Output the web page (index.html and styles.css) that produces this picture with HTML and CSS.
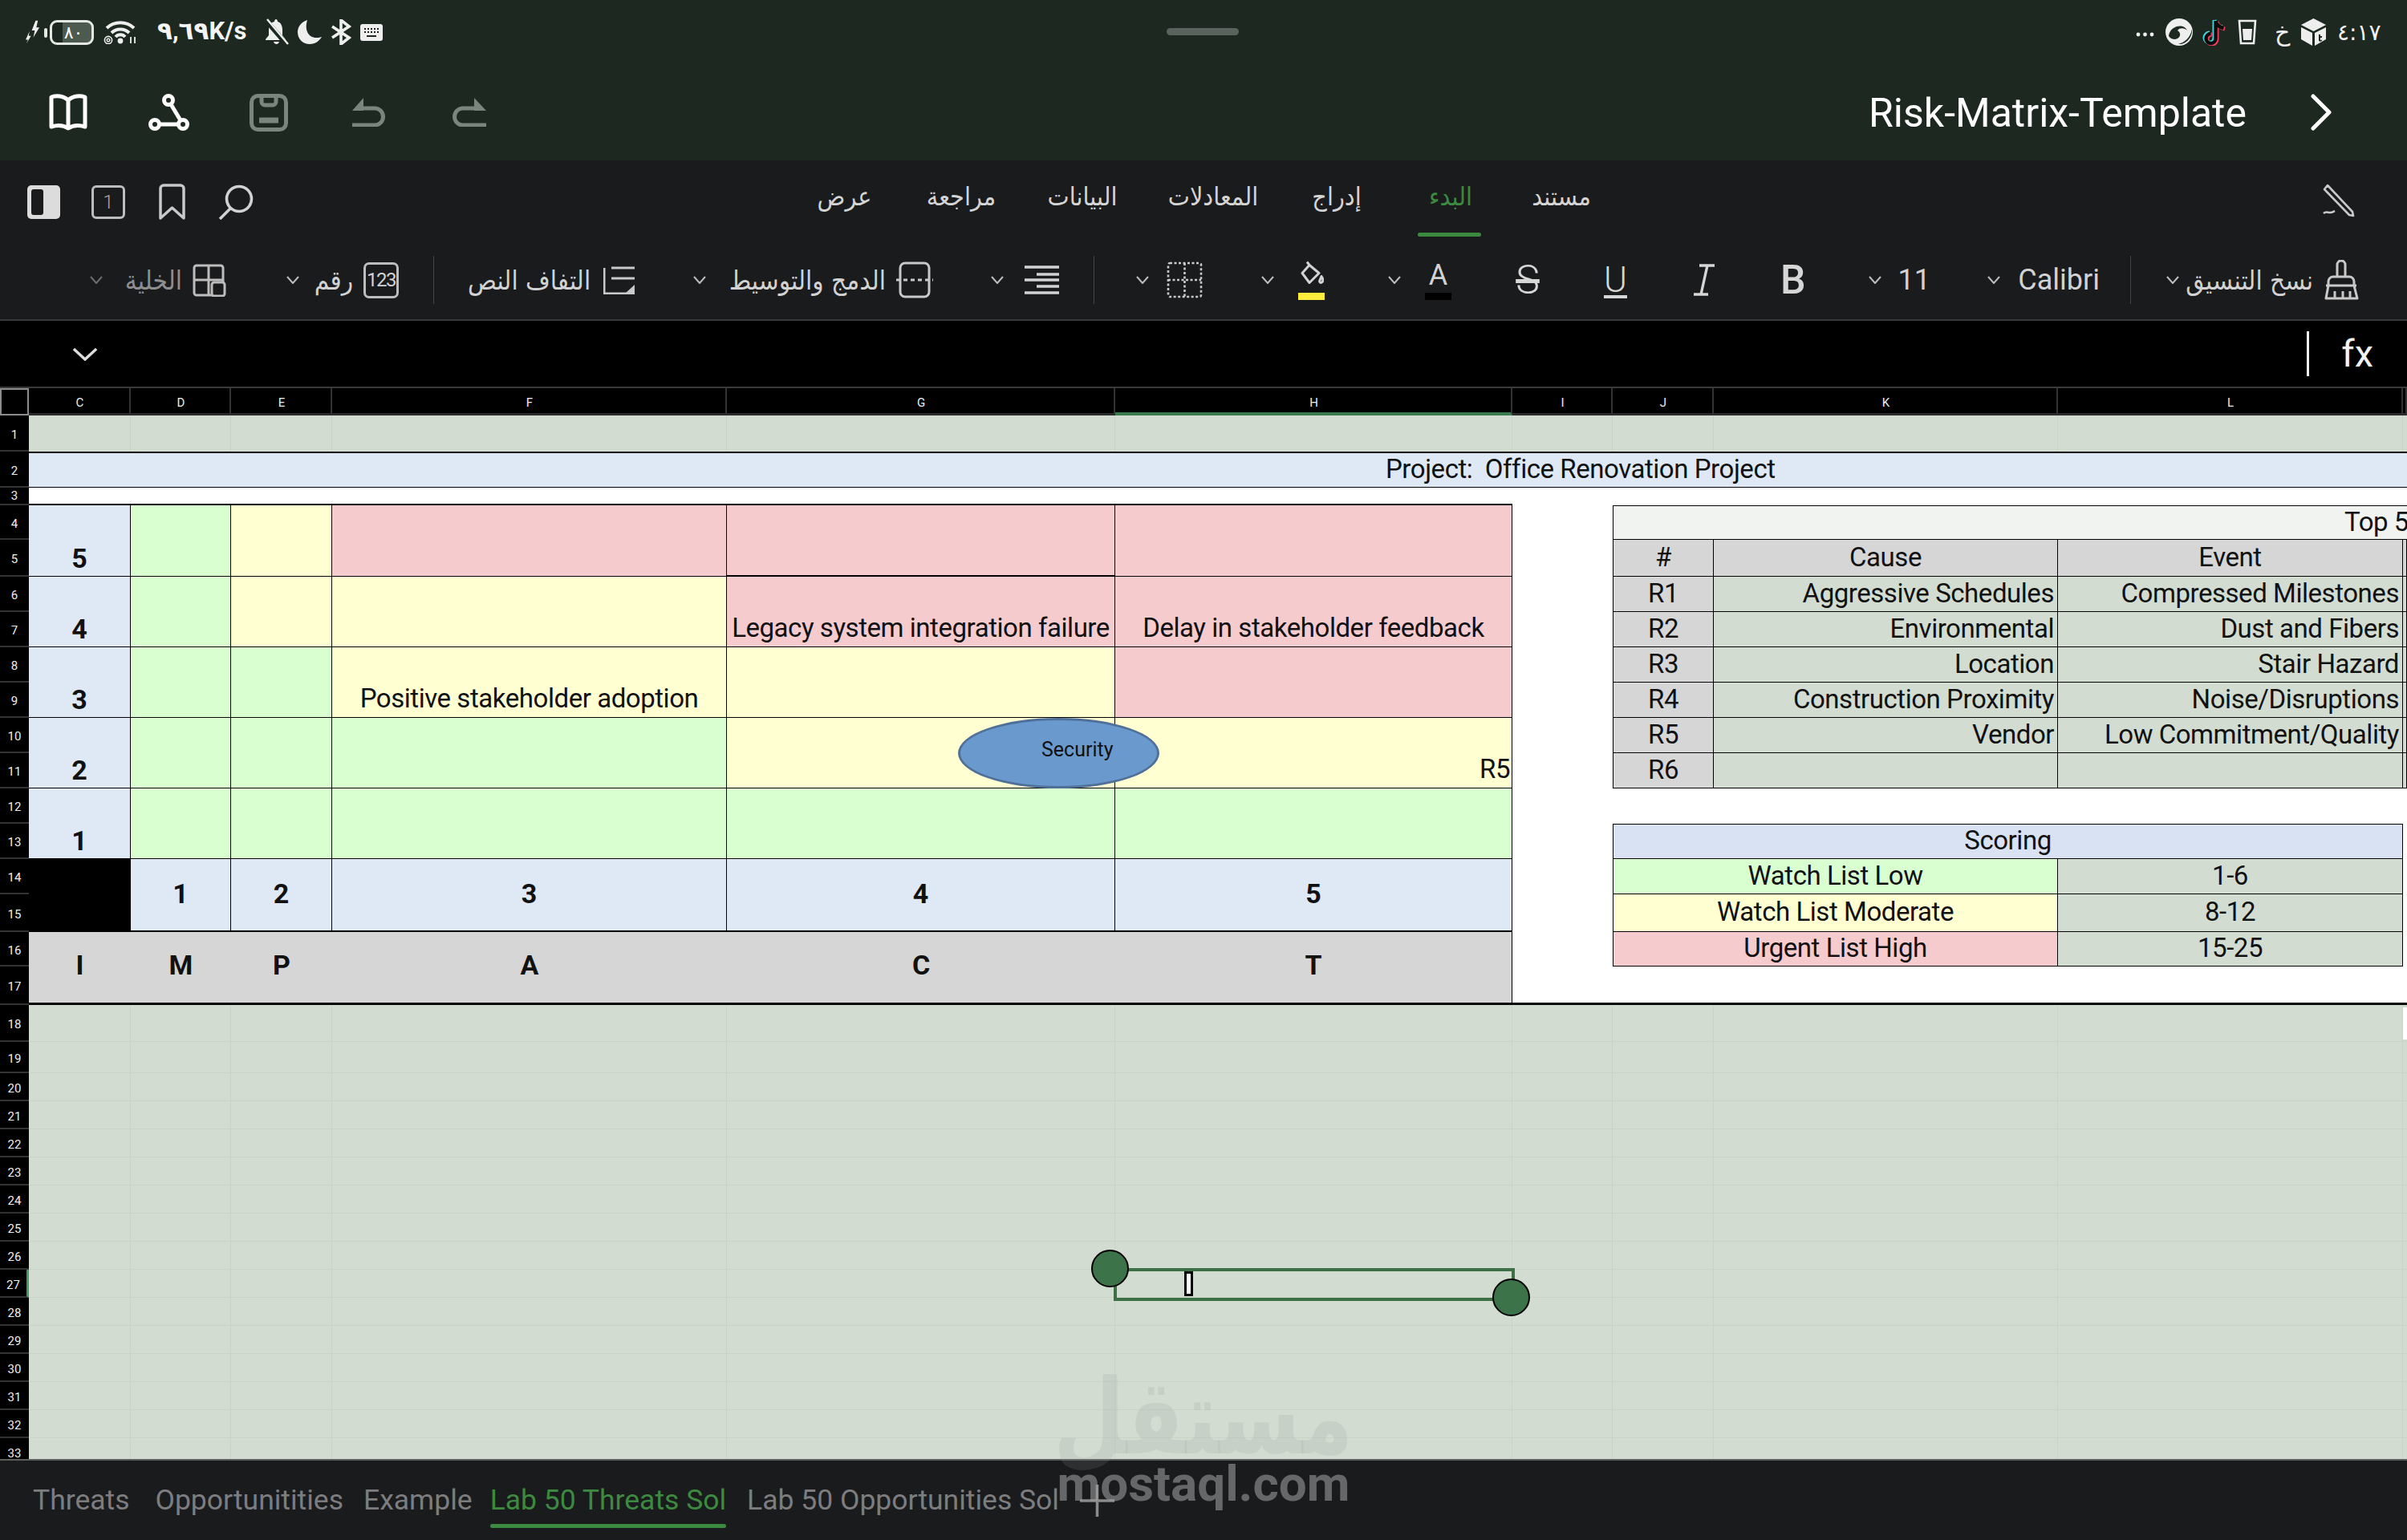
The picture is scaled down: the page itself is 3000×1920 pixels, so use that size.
FILE: index.html
```html
<!DOCTYPE html>
<html lang="ar">
<head>
<meta charset="utf-8">
<title>Risk-Matrix-Template</title>
<link rel="stylesheet" href="styles.css">
</head>
<body>
<div class="app" dir="ltr">
  <header class="topbar">
    <div class="handle"></div>
    <div class="status">
      <div class="status-left">
        <svg class="i-bolt" viewBox="0 0 20 30"><path fill="#eee" d="M13 0L8 13h4l-2 9 8-13h-4l2-9zM5 14L0 25h3l-2 5 6-10H4z"/></svg>
        <div class="batt"><span>٨٠</span></div>
        <svg class="i-wifi" viewBox="0 0 44 30" fill="none" stroke="#eee" stroke-width="4"><path d="M5 10a25 25 0 0 1 34 0M11 16a16 16 0 0 1 22 0M16 21a8 8 0 0 1 12 0"/><circle cx="22" cy="26" r="3.4" fill="#eee" stroke="none"/><circle cx="7" cy="25" r="4.6" stroke-width="1.6"/><circle cx="7" cy="25" r="1.8" stroke-width="1.4"/><path stroke-width="1.8" d="M35 21v8M40 29v-8"/></svg>
        <span class="speed">٩,٦٩K/s</span>
        <svg class="i-bell" viewBox="0 0 30 34"><path fill="#eee" d="M14 1c-1 0-2 1-2 3C7 5 5 9 5 14v7l-4 5v1h25v-1l-4-5v-6C22 9 20 5 16 4c0-2-1-3-2-3zM11 29h7c-1 4-6 4-7 0z"/><path d="M1 2l27 31" stroke="#1c2820" stroke-width="6"/><path d="M3 1l26 31" stroke="#eee" stroke-width="2.4"/></svg>
        <svg class="i-moon" viewBox="0 0 30 30"><path fill="#eee" d="M12 0C5 2 0 8 0 15c0 9 7 15 15 15 7 0 12-4 15-9-3 1-5 1-7 1-9 0-15-9-11-22z"/></svg>
        <svg class="i-bt" viewBox="0 0 26 32" fill="none" stroke="#eee" stroke-width="3.6"><path d="M2 9l21 14-10 8V1l10 8L2 23"/></svg>
        <svg class="i-kb" viewBox="0 0 28 21"><rect width="28" height="21" rx="3" fill="#eee"/><path stroke="#1c2820" stroke-width="2" stroke-dasharray="2 2" d="M5 6h18M5 10h18"/><path stroke="#1c2820" stroke-width="2" d="M8 15h12"/></svg>
      </div>
      <div class="status-right">
        <svg class="i-dots" viewBox="0 0 23 6"><circle cx="3" cy="3" r="2.4" fill="#eee"/><circle cx="11.500" cy="3" r="2.400" fill="#eee"/><circle cx="20" cy="3" r="2.4" fill="#eee"/></svg>
        <svg class="i-edge" viewBox="0 0 36 34"><circle cx="18" cy="17" r="17" fill="#eee"/><path d="M5 22C6 9 24 5 28 15c-3-3-9-4-12 0 5 3 4 10-3 11-3 0-6-1-8-4zM34 13c1 10-7 20-17 19 7-2 15-7 17-19z" fill="#1c2820"/></svg>
        <svg class="i-tt" viewBox="0 0 30 34" fill="none" stroke-width="5"><path stroke="#3fd8de" d="M16 2v22a6 6 0 1 1-6-6M16 2c1 5 5 8 10 9"/><path stroke="#ee3f5e" d="M19 4v22a6 6 0 1 1-6-6M19 4c1 5 5 8 10 9"/><path stroke="#0b0b0b" stroke-width="4.400" d="M17.500 3v22a6 6 0 1 1-6-6M17.500 3c1 5 5 8 10 9"/></svg>
        <svg class="i-cup" viewBox="0 0 24 32"><path fill="none" stroke="#eee" stroke-width="2.600" d="M2 2h20l-2 28H4z"/><path fill="#eee" d="M6 12h12l-1 14H7z"/></svg>
        <span class="kh">خ</span>
        <svg class="i-box" viewBox="0 0 31 34"><path fill="#eee" d="M15.500 0L31 8 15.500 16 0 8zM0 11l14 7v16L0 26zM17 18l14-7v15l-14 8z"/><path fill="#1c2820" d="M22 20h2v2h2v2h-2v3c1 0 2 0 2-1v2c-2 1-4 1-4-1z"/></svg>
        <span class="time">٤:١٧</span>
      </div>
    </div>
    <div class="titlerow">
      <div class="title-icons">
        <svg class="i-book" viewBox="0 0 48 46" fill="none" stroke="#fff" stroke-width="5" stroke-linejoin="round"><path d="M24 8C18 2 9 2 3 4v37c7-2 15-2 21 2 6-4 14-4 21-2V4c-6-2-15-2-21 4zM24 8v35"/></svg>
        <svg class="i-share" viewBox="0 0 51 46" fill="none" stroke="#fff" stroke-width="5"><circle cx="25" cy="8" r="5.500"/><circle cx="8" cy="38" r="5.500"/><circle cx="43" cy="38" r="5.500"/><path d="M28 13l12 20M14 38h23"/></svg>
        <svg class="i-save" viewBox="0 0 48 47" fill="none" stroke="#7a857e" stroke-width="5"><rect x="2.500" y="2.500" width="43" height="42" rx="8"/><path d="M15 3v7a4 4 0 0 0 4 4h10a4 4 0 0 0 4-4V3"/><path d="M12 33h24" stroke-width="7"/></svg>
        <svg class="i-undo" viewBox="0 0 44 36" fill="none" stroke="#7a857e" stroke-width="5"><path d="M12 13h17a10.500 10.500 0 0 1 0 21H1"/><path fill="#7a857e" stroke="none" d="M15 0v16H1z"/></svg>
        <svg class="i-redo" viewBox="0 0 44 36" fill="none" stroke="#7a857e" stroke-width="5"><path d="M32 13H15a10.500 10.500 0 0 0 0 21h29"/><path fill="#7a857e" stroke="none" d="M29 0v16h15z"/></svg>
      </div>
      <div class="doc">
        <span class="doc-name">Risk-Matrix-Template</span>
        <svg class="i-next" viewBox="0 0 26 46" fill="none" stroke="#fff" stroke-width="5" stroke-linecap="round" stroke-linejoin="round"><path d="M3 3l20 20L3 43"/></svg>
      </div>
    </div>
  </header>

  <section class="ribbon">
    <div class="tabrow">
      <div class="view-icons">
        <svg class="i-panel" viewBox="0 0 41 42"><rect width="41" height="42" rx="5" fill="#dcdcdc"/><rect x="5" y="5" width="15" height="32" rx="3" fill="#1a1b1d"/></svg>
        <div class="pagebox">1</div>
        <svg class="i-mark" viewBox="0 0 33 45" fill="none" stroke="#c9c9c9" stroke-width="3.500" stroke-linejoin="round"><path d="M2 6a4 4 0 0 1 4-4h21a4 4 0 0 1 4 4v37L16.500 30 2 43z"/></svg>
        <svg class="i-search" viewBox="0 0 44 44" fill="none" stroke="#d2d2d2" stroke-width="3.600"><circle cx="26" cy="18" r="15.500"/><path d="M15 30L2 43"/></svg>
      </div>
      <nav class="tabs">
        <span>عرض</span><span>مراجعة</span><span>البيانات</span><span>المعادلات</span><span>إدراج</span><span class="on">البدء</span><span>مستند</span>
      </nav>
      <svg class="i-pen" viewBox="0 0 41 41" fill="none" stroke="#c9c9c9" stroke-width="2.600" stroke-linejoin="round"><path d="M3 6l4-5 31 33 1 5-5-1zM2 36c3-3 5-1 8-1s4-1 6-2"/></svg>
    </div>
    <div class="fmtrow">
      <div class="tool t-cell dim"><svg class="caret" viewBox="0 0 16 10"><path d="M1 1l7 8 7-8"/></svg><span class="lbl">الخلية</span><svg class="i-cells" viewBox="0 0 42 41" fill="none" stroke="#bdbdbd" stroke-width="3"><rect x="2" y="2" width="36" height="37" rx="3"/><path d="M20 2v37M2 20h36"/><rect x="24" y="23" width="16" height="17" rx="3" fill="#1a1b1d"/></svg></div>
      <div class="tool t-num"><svg class="caret" viewBox="0 0 16 10"><path d="M1 1l7 8 7-8"/></svg><span class="lbl">رقم</span><div class="numbox">123</div></div>
      <i class="sep s1"></i>
      <div class="tool t-wrap"><span class="lbl">التفاف النص</span><svg class="i-wrap" viewBox="0 0 40 36" fill="none" stroke="#c9c9c9" stroke-width="3"><path d="M1 3v32h38M10 3h29M10 16h29"/><path fill="#c9c9c9" stroke="none" d="M39 24v10H28z"/></svg></div>
      <div class="tool t-merge"><svg class="caret" viewBox="0 0 16 10"><path d="M1 1l7 8 7-8"/></svg><span class="lbl">الدمج والتوسيط</span><svg class="i-merge" viewBox="0 0 46 46" fill="none" stroke="#c9c9c9" stroke-width="3"><rect x="5" y="2" width="36" height="42" rx="6"/><path d="M0 23h46" stroke-dasharray="5 4"/></svg></div>
      <div class="tool t-align"><svg class="caret" viewBox="0 0 16 10"><path d="M1 1l7 8 7-8"/></svg><svg class="i-align" viewBox="0 0 43 36" stroke="#d2d2d2" stroke-width="3.500"><path d="M0 2h43M15 11h28M0 18h43M15 26h28M0 34h43"/></svg></div>
      <i class="sep s2"></i>
      <div class="tool t-border"><svg class="caret" viewBox="0 0 16 10"><path d="M1 1l7 8 7-8"/></svg><svg class="i-border" viewBox="0 0 45 46" fill="none" stroke="#c9c9c9" stroke-width="2.600" stroke-dasharray="3 2.500"><rect x="2" y="2" width="41" height="42" rx="2"/><path d="M22.500 2v42M2 23h41"/></svg></div>
      <div class="tool t-fill"><svg class="caret" viewBox="0 0 16 10"><path d="M1 1l7 8 7-8"/></svg><div class="stack"><svg class="i-bucket" viewBox="0 0 30 30" fill="none" stroke="#d2d2d2" stroke-width="3" stroke-linejoin="round"><path d="M9 1l3 4L3 15l9 12 12-12L12 5M27 19c2 3 3 5 1 7s-4 0-3-2z"/></svg><b class="swatch yellow"></b></div></div>
      <div class="tool t-color"><svg class="caret" viewBox="0 0 16 10"><path d="M1 1l7 8 7-8"/></svg><div class="stack"><span class="letter-a">A</span><b class="swatch black"></b></div></div>
      <span class="fx-btn t-s">S</span>
      <span class="fx-btn t-u">U</span>
      <svg class="i-italic" viewBox="0 0 26 40" fill="none" stroke="#d6d6d6" stroke-width="3.400"><path d="M7 2h19M0 38h18M17 2L9 38"/></svg>
      <span class="fx-btn t-b">B</span>
      <div class="tool t-size"><svg class="caret" viewBox="0 0 16 10"><path d="M1 1l7 8 7-8"/></svg><span class="val">11</span></div>
      <div class="tool t-font"><svg class="caret" viewBox="0 0 16 10"><path d="M1 1l7 8 7-8"/></svg><span class="val">Calibri</span></div>
      <i class="sep s3"></i>
      <div class="tool t-copy"><svg class="caret" viewBox="0 0 16 10"><path d="M1 1l7 8 7-8"/></svg><span class="lbl">نسخ التنسيق</span><svg class="i-brush" viewBox="0 0 44 50" fill="none" stroke="#c9c9c9" stroke-width="3" stroke-linejoin="round"><path d="M17 21V6a5 5 0 0 1 10 0v15M6 32v-5a6 6 0 0 1 6-6h20a6 6 0 0 1 6 6v5zM3 48l3-16h32l4 16zM14 48v-9M24 48v-9M33 48v-9M3 32h38"/></svg></div>
    </div>
  </section>

  <section class="formula">
    <svg class="i-down" viewBox="0 0 34 18" fill="none" stroke="#ddd" stroke-width="3.600"><path d="M2 2l15 14L32 2"/></svg>
    <div class="fx"><i class="fx-bar"></i><span>fx</span></div>
  </section>

  <section class="sheet">
    <!-- faint grid lines -->
    <i class="vl cC"></i><i class="vl cD"></i><i class="vl cE"></i><i class="vl cF"></i><i class="vl cG"></i><i class="vl cH"></i><i class="vl cI"></i><i class="vl cJ"></i><i class="vl cK"></i><i class="vl cL"></i>
    <i class="hl r18"></i><i class="hl r19"></i><i class="hl r20"></i><i class="hl r21"></i><i class="hl r22"></i><i class="hl r23"></i><i class="hl r24"></i><i class="hl r25"></i><i class="hl r26"></i><i class="hl r27"></i><i class="hl r28"></i><i class="hl r29"></i><i class="hl r30"></i><i class="hl r31"></i><i class="hl r32"></i>

    <!-- column headers -->
    <div class="corner"></div>
    <div class="ch cC">C</div><div class="ch cD">D</div><div class="ch cE">E</div><div class="ch cF">F</div><div class="ch cG">G</div><div class="ch cH active">H</div><div class="ch cI">I</div><div class="ch cJ">J</div><div class="ch cK">K</div><div class="ch cL">L</div><div class="ch cM"></div>

    <!-- row headers -->
    <div class="rh r1">1</div><div class="rh r2">2</div><div class="rh r3 thin">3</div><div class="rh r4">4</div><div class="rh r5">5</div><div class="rh r6">6</div><div class="rh r7">7</div><div class="rh r8">8</div><div class="rh r9">9</div><div class="rh r10">10</div><div class="rh r11">11</div><div class="rh r12">12</div><div class="rh r13">13</div><div class="rh r14">14</div><div class="rh r15">15</div><div class="rh r16">16</div><div class="rh r17">17</div><div class="rh r18">18</div><div class="rh r19">19</div><div class="rh r20">20</div><div class="rh r21">21</div><div class="rh r22">22</div><div class="rh r23">23</div><div class="rh r24">24</div><div class="rh r25">25</div><div class="rh r26">26</div><div class="rh r27 active">27</div><div class="rh r28">28</div><div class="rh r29">29</div><div class="rh r30">30</div><div class="rh r31">31</div><div class="rh r32">32</div><div class="rh r33">33</div>

    <!-- banner and white sheet zones -->
    <div class="banner r2">Project:&nbsp; Office Renovation Project</div>
    <div class="whitegap r3"></div>
    <div class="whitezone"></div>
    <i class="tick"></i>

    <!-- matrix -->
    <div class="cell blue axis cC m4">5</div><div class="cell green cD m4"></div><div class="cell yellow cE m4"></div><div class="cell red cF m4"></div><div class="cell red cG m4 heavy"></div><div class="cell red cH m4"></div>
    <div class="cell blue axis cC m6">4</div><div class="cell green cD m6"></div><div class="cell yellow cE m6"></div><div class="cell yellow cF m6"></div><div class="cell red cG m6 txt">Legacy system integration failure</div><div class="cell red cH m6 txt">Delay in stakeholder feedback</div>
    <div class="cell blue axis cC m8">3</div><div class="cell green cD m8"></div><div class="cell green cE m8"></div><div class="cell yellow cF m8 txt">Positive stakeholder adoption</div><div class="cell yellow cG m8"></div><div class="cell red cH m8"></div>
    <div class="cell blue axis cC m10">2</div><div class="cell green cD m10"></div><div class="cell green cE m10"></div><div class="cell green cF m10"></div><div class="cell yellow cG m10"></div><div class="cell yellow cH m10 txt end">R5</div>
    <div class="cell blue axis cC m12">1</div><div class="cell green cD m12"></div><div class="cell green cE m12"></div><div class="cell green cF m12"></div><div class="cell green cG m12"></div><div class="cell green cH m12"></div>
    <div class="blackcell cC m14"></div><div class="cell blue num cD m14">1</div><div class="cell blue num cE m14">2</div><div class="cell blue num cF m14">3</div><div class="cell blue num cG m14">4</div><div class="cell blue num cH m14">5</div>
    <div class="impact cC m16">I</div><div class="impact cD m16">M</div><div class="impact cE m16">P</div><div class="impact cF m16">A</div><div class="impact cG m16">C</div><div class="impact cH m16 lastimpact">T</div>

    <!-- top 5 table -->
    <div class="cell pale top5 r4">Top 5 Risks</div>
    <div class="cell grey mid cJ r5">#</div><div class="cell grey mid cK r5">Cause</div><div class="cell grey mid cL r5">Event</div><div class="cell grey cM r5"></div>
    <div class="cell grey mid cJ r6">R1</div><div class="cell sage tr cK r6">Aggressive Schedules</div><div class="cell sage tr cL r6">Compressed Milestones</div><div class="cell sage cM r6"></div>
    <div class="cell grey mid cJ r7">R2</div><div class="cell sage tr cK r7">Environmental</div><div class="cell sage tr cL r7">Dust and Fibers</div><div class="cell sage cM r7"></div>
    <div class="cell grey mid cJ r8">R3</div><div class="cell sage tr cK r8">Location</div><div class="cell sage tr cL r8">Stair Hazard</div><div class="cell sage cM r8"></div>
    <div class="cell grey mid cJ r9">R4</div><div class="cell sage tr cK r9">Construction Proximity</div><div class="cell sage tr cL r9">Noise/Disruptions</div><div class="cell sage cM r9"></div>
    <div class="cell grey mid cJ r10">R5</div><div class="cell sage tr cK r10">Vendor</div><div class="cell sage tr cL r10">Low Commitment/Quality</div><div class="cell sage cM r10"></div>
    <div class="cell grey mid cJ r11">R6</div><div class="cell sage tr cK r11"></div><div class="cell sage tr cL r11"></div><div class="cell sage cM r11"></div>

    <!-- scoring table -->
    <div class="cell scorehead mid score-all r13">Scoring</div>
    <div class="cell green mid score-l r14">Watch List Low</div><div class="cell sage mid cL r14">1-6</div>
    <div class="cell yellow mid score-l r15">Watch List Moderate</div><div class="cell sage mid cL r15">8-12</div>
    <div class="cell red mid score-l r16">Urgent List High</div><div class="cell sage mid cL r16">15-25</div>

    <!-- floating shape and selection -->
    <div class="shape"><span>Security</span></div>
    <div class="selection">
      <i class="grip grip-a"></i>
      <i class="grip grip-b"></i>
      <i class="caret-bar"></i>
    </div>
  </section>

  <footer class="sheets">
    <span class="st st1">Threats</span>
    <span class="st st2">Opportunitities</span>
    <span class="st st3">Example</span>
    <span class="st st4 on">Lab 50 Threats Sol</span>
    <span class="st st5">Lab 50 Opportunities Sol</span>
    <svg class="i-plus" viewBox="0 0 43 40" stroke="#8b8b8b" stroke-width="3.500"><path d="M0 20h43M21.500 0v40"/></svg>
  </footer>

  <div class="wm">
    <span class="wm-ar">مستقل</span>
    <span class="wm-en">mostaql.com</span>
  </div>
</div>
</body>
</html>
```

FILE: styles.css
```css
* { box-sizing: border-box; }
html, body { margin: 0; padding: 0; background: #000; }
body { font-family: Roboto, "DejaVu Sans", sans-serif; }
.app { position: relative; width: 3000px; height: 1920px; overflow: hidden; display: flex; flex-direction: column; }
svg { display: block; flex: none; }

/* top bar */
.topbar { height: 200px; background: #1c2820; position: relative; color: #fff; }
.handle { position: absolute; left: 1454px; top: 35px; width: 90px; height: 9px; border-radius: 5px; background: #5b635e; }
.status { height: 80px; padding: 24px 35px 0 32px; display: flex; justify-content: space-between; align-items: flex-start; }
.status-left, .status-right { display: flex; align-items: center; height: 32px; }
.status-left { gap: 11px; }
.i-bolt { width: 19px; height: 30px; }
.batt { position: relative; width: 55px; height: 31px; border: 3px solid #e4e8e4; border-radius: 9px; background: linear-gradient(90deg, transparent 26%, #4c5a50 26%); display: flex; align-items: center; justify-content: center; font: 22px "DejaVu Sans", sans-serif; color: #fff; padding-left: 4px; }
.batt::before { content: ""; position: absolute; left: -10px; top: 7px; width: 4px; height: 12px; border-radius: 2px; background: #e4e8e4; }
.i-wifi { width: 44px; height: 30px; }
.speed { margin: 0 13px; font: 700 31px Roboto, "DejaVu Sans", sans-serif; color: #f4f4f4; white-space: nowrap; width: 110px; transform: translateY(-2px); }
.i-bell { width: 30px; height: 34px; }
.i-moon { width: 30px; height: 30px; }
.i-bt { width: 26px; height: 32px; }
.i-kb { width: 28px; height: 21px; }
.i-dots { width: 23px; height: 6px; margin-top: 6px; }
.i-edge { width: 36px; height: 34px; margin-left: 13px; }
.i-tt { width: 30px; height: 34px; margin-left: 10px; }
.i-cup { width: 24px; height: 32px; margin-left: 15px; }
.kh { font: 30px "DejaVu Sans", sans-serif; color: #eee; margin-left: 22px; width: 15px; }
.i-box { width: 31px; height: 34px; margin-left: 18px; }
.time { font: 500 28px "DejaVu Sans", sans-serif; color: #f2f2f2; margin-left: 14px; width: 52px; white-space: nowrap; }

.titlerow { height: 120px; display: flex; justify-content: space-between; align-items: center; padding: 0 94px 0 61px; }
.title-icons { display: flex; align-items: center; }
.i-book { width: 48px; height: 46px; }
.i-share { width: 51px; height: 46px; margin-left: 76px; }
.i-save { width: 48px; height: 47px; margin-left: 75px; }
.i-undo { width: 44px; height: 36px; margin-left: 79px; }
.i-redo { width: 44px; height: 36px; margin-left: 80px; }
.doc { display: flex; align-items: center; gap: 80px; }
.doc-name { font-size: 50px; line-height: 60px; color: #fff; letter-spacing: 0; padding-top: 2px; }
.i-next { width: 26px; height: 46px; }

/* ribbon */
.ribbon { height: 200px; background: #1a1b1d; }
.tabrow { height: 100px; position: relative; display: flex; align-items: flex-start; }
.view-icons { display: flex; align-items: center; padding: 29px 0 0 34px; }
.i-panel { width: 41px; height: 42px; }
.pagebox { width: 42px; height: 42px; margin-left: 39px; border: 3px solid #bdbdbd; border-radius: 6px; display: flex; align-items: center; justify-content: center; color: #a9a9a9; font-size: 24px; font-weight: 300; }
.i-mark { width: 33px; height: 45px; margin-left: 42px; }
.i-search { width: 44px; height: 44px; margin-left: 41px; }
.tabs { position: absolute; left: 980px; top: 0; display: grid; grid-template-columns: 145px 146px 156px 170px 138px 146px 130px; height: 100px; font: 32px "DejaVu Sans", sans-serif; font-stretch: condensed; color: #d4d4d4; text-align: center; line-height: 90px; }
.tabs .on { color: #3c8a3f; position: relative; }
.tabs .on::after { content: ""; position: absolute; left: 32px; top: 90px; width: 79px; height: 5px; border-radius: 3px; background: #3c8a3f; }
.i-pen { position: absolute; left: 2894px; top: 30px; width: 41px; height: 41px; }

.fmtrow { height: 100px; display: flex; align-items: center; padding-bottom: 0; border-bottom: 2px solid #3a3a3a; position: relative; color: #d2d2d2; }
.tool { display: flex; align-items: center; justify-content: space-between; height: 60px; flex: none; }
.caret { width: 16px; height: 10px; fill: none; stroke: #bdbdbd; stroke-width: 2; }
.lbl { font: 33px "DejaVu Sans", sans-serif; font-stretch: condensed; white-space: nowrap; margin-left: auto; margin-right: 13px; }
.t-wrap .lbl { margin-right: 16px; }
.val { font-size: 36px; color: #d2d2d2; }
.dim .lbl { color: #8e8e8e; }
.dim .caret { stroke: #6d6d6d; }
.sep { flex: none; width: 1px; height: 60px; background: #444; }
.t-cell { width: 170px; margin-left: 112px; }
.i-cells { width: 42px; height: 41px; }
.t-num { width: 140px; margin-left: 75px; }
.numbox { width: 44px; height: 45px; border: 3px solid #bdbdbd; border-radius: 7px; font-size: 24px; line-height: 39px; text-align: center; letter-spacing: -1.500px; color: #d2d2d2; }
.s1 { margin-left: 43px; }
.t-wrap { width: 206px; margin-left: 42px; }
.i-wrap { width: 40px; height: 36px; }
.t-merge { width: 299px; margin-left: 75px; }
.i-merge { width: 46px; height: 46px; }
.t-align { width: 85px; margin-left: 72px; }
.i-align { width: 43px; height: 36px; }
.s2 { margin-left: 43px; }
.t-border { width: 83px; margin-left: 52px; }
.i-border { width: 45px; height: 46px; }
.t-fill { width: 79px; margin-left: 73px; }
.stack { display: flex; flex-direction: column; align-items: center; width: 33px; height: 50px; justify-content: space-between; }
.i-bucket { width: 30px; height: 33px; }
.swatch { display: block; width: 33px; height: 9px; }
.yellow.swatch { background: #ffeb3b; }
.black.swatch { background: #000; }
.t-color { width: 79px; margin-left: 79px; }
.letter-a { font-size: 36px; line-height: 38px; color: #d2d2d2; }
.fx-btn { flex: none; font-size: 50px; line-height: 60px; text-align: center; color: #d6d6d6; }
.t-s { width: 38px; margin-left: 76px; text-decoration: line-through; font-weight: 300; }
.t-u { width: 37px; margin-left: 72px; font-size: 44px; font-weight: 300; text-decoration: underline; text-underline-offset: 4px; }
.i-italic { width: 26px; height: 40px; margin-left: 79px; }
.t-b { width: 28px; margin-left: 82px; font-weight: 500; }
.t-size { width: 77px; margin-left: 82px; }
.t-font { width: 140px; margin-left: 71px; }
.s3 { margin-left: 38px; }
.t-copy { width: 240px; margin-left: 44px; }
.i-brush { width: 44px; height: 50px; }

/* formula bar */
.formula { height: 84px; background: #000; border-bottom: 2px solid #3a3a3a; display: flex; align-items: center; justify-content: space-between; padding: 0 42px 0 90px; }
.i-down { width: 32px; height: 17px; }
.fx { display: flex; align-items: center; gap: 40px; color: #f2f2f2; font-size: 47px; line-height: 56px; }
.fx-bar { width: 3px; height: 56px; background: #f2f2f2; }

/* sheet grid */
.sheet { position: relative; height: 1335px; background: #d2dcd0; overflow: hidden; display: grid;
  grid-template-columns: 36px 127px 125px 126px 492px 484px 495px 125px 126px 429px 430px 5px;
  grid-template-rows: 34px 45px 45px 22px 43px 46px 44px 44px 44px 44px 44px 44px 44px 44px 44px 47px 43px 48px 46px 39px repeat(14, 35px); }
.vl { grid-row: 2 / -1; border-right: 1px solid #c9d4c7; }
.hl { grid-column: 2 / -1; border-bottom: 1px solid #c9d4c7; }
.cC { grid-column: 2; } .cD { grid-column: 3; } .cE { grid-column: 4; } .cF { grid-column: 5; } .cG { grid-column: 6; } .cH { grid-column: 7; } .cI { grid-column: 8; } .cJ { grid-column: 9; } .cK { grid-column: 10; } .cL { grid-column: 11; } .cM { grid-column: 12; }
.r1 { grid-row: 2; } .r2 { grid-row: 3; } .r3 { grid-row: 4; } .r4 { grid-row: 5; } .r5 { grid-row: 6; } .r6 { grid-row: 7; } .r7 { grid-row: 8; } .r8 { grid-row: 9; } .r9 { grid-row: 10; } .r10 { grid-row: 11; } .r11 { grid-row: 12; } .r12 { grid-row: 13; } .r13 { grid-row: 14; } .r14 { grid-row: 15; } .r15 { grid-row: 16; } .r16 { grid-row: 17; } .r17 { grid-row: 18; } .r18 { grid-row: 19; } .r19 { grid-row: 20; } .r20 { grid-row: 21; } .r21 { grid-row: 22; } .r22 { grid-row: 23; } .r23 { grid-row: 24; } .r24 { grid-row: 25; } .r25 { grid-row: 26; } .r26 { grid-row: 27; } .r27 { grid-row: 28; } .r28 { grid-row: 29; } .r29 { grid-row: 30; } .r30 { grid-row: 31; } .r31 { grid-row: 32; } .r32 { grid-row: 33; } .r33 { grid-row: 34; }
.m4 { grid-row: 5 / 7; } .m6 { grid-row: 7 / 9; } .m8 { grid-row: 9 / 11; } .m10 { grid-row: 11 / 13; } .m12 { grid-row: 13 / 15; } .m14 { grid-row: 15 / 17; } .m16 { grid-row: 17 / 19; }

.corner { grid-column: 1; grid-row: 1; background: #000; border: 2px solid #8c8c8c; }
.ch { grid-row: 1; background: #000; color: #eee; font-size: 15px; display: flex; align-items: center; justify-content: center; border-right: 2px solid #333; padding: 5px 0 0 2px; border-bottom: 3px solid #2b2b2b; }
.ch.active { border-bottom: 4px solid #3c7a50; }
.rh { grid-column: 1; background: #000; color: #eee; font-size: 15px; display: flex; align-items: center; justify-content: center; border-bottom: 2px solid #333; padding-top: 4px; }
.rh.thin { padding-top: 0; }
.rh.active { border-right: 3px solid #4f9a5f; }

.banner { grid-column: 2 / -1; background: #dfe9f5; border-top: 2px solid #000; border-bottom: 1px solid #000; font-size: 33px; letter-spacing: -0.450px; color: #111; display: flex; align-items: center; padding: 0 0 3px 1691px; white-space: nowrap; }
.whitegap { grid-column: 2 / 8; background: #fff; border-bottom: 2px solid #000; }
.whitezone { grid-column: 8 / -1; grid-row: 4 / 19; background: #fff; border-bottom: 3px solid #000; }
.tick { grid-column: 12; grid-row: 19; margin-top: 3px; margin-bottom: 3px; background: #fff; }

.cell { border-right: 1px solid #000; border-bottom: 1px solid #000; display: flex; font-size: 33px; letter-spacing: -0.450px; line-height: 40px; color: #111; overflow: hidden; white-space: nowrap; }
.blue { background: #dfe9f5; }
.green { background: #d9ffd0; }
.yellow { background: #ffffd2; }
.red { background: #f5cbce; }
.grey { background: #d6d6d6; }
.sage { background: #d2dcd0; }
.pale { background: #f1f3f0; }
.scorehead { background: #d8e2f3; }
.heavy { border-bottom: 2px solid #000; }
.txt { align-items: flex-end; justify-content: center; padding-bottom: 3px; }
.txt.end { justify-content: flex-end; padding-right: 2px; }
.axis { font-weight: 700; font-size: 34px; letter-spacing: 0; align-items: flex-end; justify-content: center; padding-bottom: 2px; }
.num { font-weight: 700; font-size: 34px; letter-spacing: 0; align-items: center; justify-content: center; padding-bottom: 3px; }
.blackcell { background: #000; border-bottom: 2px solid #000; }
.m14.num { border-bottom: 2px solid #000; }
.impact { background: #d6d6d6; border-bottom: 3px solid #000; font-weight: 700; font-size: 34px; color: #111; display: flex; align-items: center; justify-content: center; padding-bottom: 6px; }
.lastimpact { border-right: 1px solid #000; }
.mid { align-items: center; justify-content: center; padding-bottom: 2px; }
.tr { align-items: center; justify-content: flex-end; padding: 0 4px 2px 0; }
.top5 { grid-column: 9 / -1; align-items: center; padding: 0 0 2px 911px; border-left: 1px solid #000; border-top: 1px solid #000; border-right: 0; }
.cJ.cell { border-left: 1px solid #000; }
.score-all { grid-column: 9 / 12; border-left: 1px solid #000; border-top: 1px solid #000; }
.score-l { grid-column: 9 / 11; border-left: 1px solid #000; }

.shape { position: absolute; left: 1194px; top: 411px; width: 251px; height: 88px; border-radius: 50%; background: #6a99ce; border: 3px solid #4f7199; font-size: 25px; color: #111; display: flex; align-items: center; padding: 0 0 10px 101px; }
.selection { position: absolute; left: 1388px; top: 1097px; width: 500px; height: 41px; border: 4px solid #3d7045; }
.grip { position: absolute; width: 47px; height: 47px; border-radius: 50%; background: #3d7349; border: 2px solid #000; }
.grip-a { left: -32px; top: -27px; }
.grip-b { left: 468px; top: 9px; }
.caret-bar { position: absolute; left: 84px; top: 0; width: 11px; height: 31px; background: #fff; border: 3px solid #000; }

/* sheet tabs */
.sheets { height: 101px; background: #1a1b1d; border-top: 2px solid #5c5f5c; display: flex; align-items: flex-start; position: relative; font-size: 35.500px; color: #7d7d7f; padding-top: 26px; }
.st { flex: none; line-height: 46px; white-space: nowrap; }
.st1 { margin-left: 41px; }
.st2 { margin-left: 32px; }
.st3 { margin-left: 25px; }
.st4 { margin-left: 22px; color: #3c8a3f; position: relative; }
.st4::after { content: ""; position: absolute; left: 0; right: 0; top: 53px; height: 5px; border-radius: 3px; background: #3c8a3f; }
.st5 { margin-left: 26px; }
.i-plus { width: 43px; height: 40px; margin-left: 26px; margin-top: 4px; }

/* watermark */
.wm { position: absolute; left: 1321px; top: 1708px; width: 358px; display: flex; flex-direction: column; align-items: center; pointer-events: none; }
.wm-ar { font: 700 118px/111px "DejaVu Sans", sans-serif; color: rgba(150, 150, 150, 0.17); white-space: nowrap; transform: translateY(4px) scale(0.866, 1.1); }
.wm-en { font: 700 62px/62px Roboto, sans-serif; color: rgba(165, 165, 165, 0.55); white-space: nowrap; }
```
